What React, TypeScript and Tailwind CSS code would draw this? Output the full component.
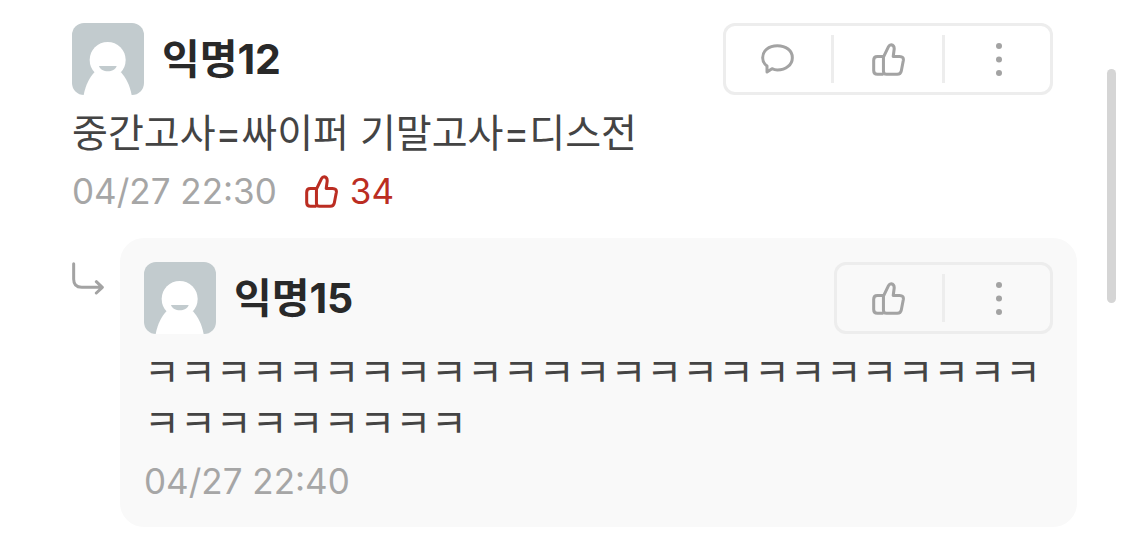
/**
 * Comment thread: one anonymous comment with a nested reply.
 */

import type { ReactNode } from 'react';

// ── Icons ─────────────────────────────────────────────────────────────────────

function ThumbIcon() {
  return (
    <svg viewBox="0 0 98 98" className="size-[33px]" fill="none" stroke="currentColor" strokeWidth="9" strokeLinejoin="round" aria-hidden="true">
      <path d="M34 40H16Q5 40 5 51V82Q5 93 16 93H34" />
      <path d="M34 42L49 11Q52 5 57 5Q66 6 66 17L63 40H82Q95 40 93 52L87 83Q85 93 75 93H43Q34 93 34 84Z" />
    </svg>
  );
}

function BubbleIcon() {
  return (
    <svg viewBox="0 0 99 90" className="h-[30px] w-[33px]" fill="none" stroke="currentColor" strokeWidth="9" strokeLinejoin="round" aria-hidden="true">
      <path d="M18 66V84L33 74Q41 78 49 78C75 78 94 62 94 41C94 20 75 5 49 5C23 5 5 20 5 41C5 52 10 60 18 66Z" />
    </svg>
  );
}

function DotsIcon() {
  return (
    <svg viewBox="0 0 6 33" className="h-[33px] w-[6px]" fill="currentColor" aria-hidden="true">
      <circle cx="3" cy="3" r="3" />
      <circle cx="3" cy="16.5" r="3" />
      <circle cx="3" cy="30" r="3" />
    </svg>
  );
}

function ReplyArrow() {
  return (
    <svg viewBox="0 0 96 99" className="h-[33px] w-8 shrink-0 text-[#a3a3a3]" fill="none" stroke="currentColor" strokeWidth="9" strokeLinecap="round" strokeLinejoin="round" aria-hidden="true">
      <path d="M5 5V52Q5 76 29 76H90M73 59L91 76L73 93" />
    </svg>
  );
}

function Avatar() {
  return (
    <svg viewBox="0 0 216 216" className="size-[72px] shrink-0 rounded-xl" aria-hidden="true">
      <rect width="216" height="216" fill="#c2cbce" />
      <path d="M35 216C41 186 52 165 67 148H147C162 165 173 186 179 216Z" fill="#fff" />
      <circle cx="107" cy="111" r="54" fill="#fff" />
      <path d="M81 129H134C128 150 87 150 81 129Z" fill="#c2cbce" />
    </svg>
  );
}

// ── Actions ───────────────────────────────────────────────────────────────────

function ActionButton({ label, children }: { label: string; children: ReactNode }) {
  return (
    <button type="button" aria-label={label} className="flex h-full w-[108px] items-center justify-center">
      {children}
    </button>
  );
}

function Divider() {
  return <span className="h-12 w-[3px] bg-[#ededed]" />;
}

function Actions({ canReply = false }: { canReply?: boolean }) {
  return (
    <div className="flex h-[72px] items-center rounded-xl text-[#a3a3a3] inset-ring-3 inset-ring-[#ededed]">
      {canReply && (
        <>
          <ActionButton label="대댓글">
            <BubbleIcon />
          </ActionButton>
          <Divider />
        </>
      )}
      <ActionButton label="공감">
        <ThumbIcon />
      </ActionButton>
      <Divider />
      <ActionButton label="더보기">
        <DotsIcon />
      </ActionButton>
    </div>
  );
}

// ── Comment ───────────────────────────────────────────────────────────────────

interface CommentProps {
  name: string;
  text: string;
  time: string;
  likes?: number;
  canReply?: boolean;
}

function Comment({ name, text, time, likes, canReply }: CommentProps) {
  return (
    <article>
      <header className="flex items-center justify-between">
        <div className="flex items-center gap-[18px]">
          <Avatar />
          <h2 className="text-[41px] leading-[62px] font-bold text-[#292929]">{name}</h2>
        </div>
        <Actions canReply={canReply} />
      </header>
      <p className="mt-3 text-[39px] leading-[51px] break-all text-[#444]">{text}</p>
      <footer className="mt-[11px] flex items-center gap-7 text-[35px] leading-[44px] text-[#a6a6a6]">
        <time>{time}</time>
        {likes !== undefined && (
          <span className="flex items-center gap-3 text-[#bb2d22]">
            <ThumbIcon />
            {likes}
          </span>
        )}
      </footer>
    </article>
  );
}

export default function App() {
  return (
    <main className="relative min-h-screen bg-white pt-[23px] pr-12 pb-5 pl-[72px] font-[Inter,'Noto_Sans_CJK_KR',sans-serif]">
      <div className="pr-6">
        <Comment name="익명12" text="중간고사=싸이퍼 기말고사=디스전" time="04/27 22:30" likes={34} canReply />
      </div>
      <div className="mt-[25px] flex items-start gap-4">
        <div className="pt-6">
          <ReplyArrow />
        </div>
        <div className="min-w-0 flex-1 rounded-3xl bg-[#f9f9f9] p-6">
          <Comment name="익명15" text={'ㅋ'.repeat(34)} time="04/27 22:40" />
        </div>
      </div>
      <div className="absolute top-[69px] right-[9px] h-[234px] w-[9px] rounded-full bg-[#d5d5d5]" />
    </main>
  );
}
